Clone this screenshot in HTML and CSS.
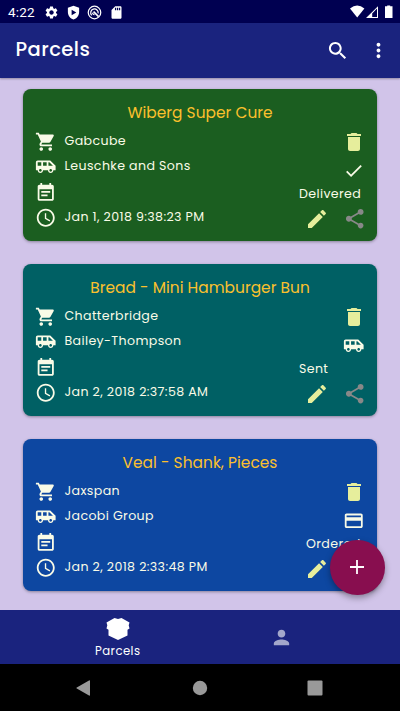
FILE: index.html
```html
<!DOCTYPE html>
<html lang="en">
<head>
<meta charset="utf-8">
<title>Parcels</title>
<link rel="stylesheet" href="styles.css">
</head>
<body>
<svg class="defs" aria-hidden="true">
  <symbol id="cart" viewBox="0 0 24 24"><path d="M7 18c-1.100 0-1.990.9-1.990 2S5.900 22 7 22s2-.9 2-2-.9-2-2-2zM1 2v2h2l3.600 7.590-1.350 2.450c-.16.280-.25.610-.25.960 0 1.100.9 2 2 2h12v-2H7.420c-.14 0-.25-.11-.25-.25l.03-.12.9-1.630h7.450c.75 0 1.410-.41 1.750-1.030l3.580-6.490c.08-.14.120-.31.120-.48 0-.55-.45-1-1-1H5.210l-.94-2H1zm16 16c-1.100 0-1.990.9-1.990 2s.89 2 1.990 2 2-.9 2-2-.9-2-2-2z"/></symbol>
  <symbol id="van" viewBox="0 0 24 24"><path d="M17 5H3c-1.100 0-2 .9-2 2v9h2c0 1.650 1.340 3 3 3s3-1.350 3-3h5.500c0 1.650 1.340 3 3 3s3-1.350 3-3H23v-5l-6-6zM3 11V7h4v4H3zm3 6.500c-.83 0-1.500-.67-1.500-1.500s.67-1.500 1.500-1.500 1.500.67 1.500 1.500-.67 1.500-1.500 1.500zm7-6.500H9V7h4v4zm4.500 6.500c-.83 0-1.500-.67-1.500-1.500s.67-1.500 1.500-1.500 1.500.67 1.500 1.500-.67 1.500-1.500 1.500zM15 11V7h1l4 4h-5z"/></symbol>
  <symbol id="note" viewBox="0 0 24 24"><path d="M17 10H7v2h10v-2zm2-7h-1V1h-2v2H8V1H6v2H5c-1.110 0-1.990.9-1.990 2L3 19c0 1.100.89 2 2 2h14c1.100 0 2-.9 2-2V5c0-1.100-.9-2-2-2zm0 16H5V8h14v11zm-5-5H7v2h7v-2z"/></symbol>
  <symbol id="clock" viewBox="0 0 24 24"><path d="M11.990 2C6.470 2 2 6.480 2 12s4.470 10 9.990 10C17.520 22 22 17.520 22 12S17.520 2 11.990 2zM12 20c-4.420 0-8-3.580-8-8s3.580-8 8-8 8 3.580 8 8-3.580 8-8 8zm.5-13H11v6l5.250 3.150.75-1.230-4.500-2.670z"/></symbol>
  <symbol id="trash" viewBox="0 0 24 24"><path d="M6 19c0 1.100.9 2 2 2h8c1.100 0 2-.9 2-2V7H6v12zM19 4h-3.500l-1-1h-5l-1 1H5v2h14V4z"/></symbol>
  <symbol id="check" viewBox="0 0 24 24"><path d="M9 16.170L4.830 12l-1.420 1.410L9 19 21 7l-1.410-1.410z"/></symbol>
  <symbol id="card" viewBox="0 0 24 24"><path d="M20 4H4c-1.110 0-1.990.89-1.990 2L2 18c0 1.110.89 2 2 2h16c1.110 0 2-.89 2-2V6c0-1.110-.89-2-2-2zm0 14H4v-6h16v6zm0-10H4V6h16v2z"/></symbol>
  <symbol id="pencil" viewBox="0 0 24 24"><path d="M3 17.250V21h3.750L17.810 9.940l-3.750-3.750L3 17.250zM20.710 7.040c.39-.39.39-1.020 0-1.410l-2.340-2.340c-.39-.39-1.020-.39-1.410 0l-1.830 1.830 3.750 3.750 1.830-1.830z"/></symbol>
  <symbol id="share" viewBox="0 0 24 24"><path d="M18 16.080c-.76 0-1.440.3-1.960.77L8.910 12.700c.05-.23.09-.46.09-.7s-.04-.47-.09-.7l7.050-4.110c.54.5 1.250.81 2.040.81 1.660 0 3-1.340 3-3s-1.340-3-3-3-3 1.340-3 3c0 .24.04.47.09.7L8.040 9.810C7.500 9.310 6.790 9 6 9c-1.660 0-3 1.340-3 3s1.340 3 3 3c.79 0 1.500-.31 2.040-.81l7.120 4.160c-.05.21-.08.43-.08.650 0 1.610 1.310 2.920 2.920 2.920s2.920-1.310 2.920-2.920-1.310-2.920-2.920-2.920z"/></symbol>
  <symbol id="search" viewBox="0 0 24 24"><path d="M15.500 14h-.79l-.28-.27C15.410 12.590 16 11.110 16 9.500 16 5.910 13.090 3 9.500 3S3 5.910 3 9.500 5.910 16 9.500 16c1.610 0 3.090-.59 4.230-1.570l.27.28v.79l5 4.990L20.490 19l-4.990-5zm-6 0C7.010 14 5 11.990 5 9.500S7.010 5 9.500 5 14 7.010 14 9.500 11.990 14 9.500 14z"/></symbol>
  <symbol id="more" viewBox="0 0 24 24"><path d="M12 8c1.100 0 2-.9 2-2s-.9-2-2-2-2 .9-2 2 .9 2 2 2zm0 2c-1.100 0-2 .9-2 2s.9 2 2 2 2-.9 2-2-.9-2-2-2zm0 6c-1.100 0-2 .9-2 2s.9 2 2 2 2-.9 2-2-.9-2-2-2z"/></symbol>
  <symbol id="gear" viewBox="0 0 24 24"><path d="M19.140 12.940c.04-.3.060-.61.060-.94 0-.32-.02-.64-.07-.94l2.030-1.580c.18-.14.230-.41.120-.61l-1.920-3.320c-.12-.22-.37-.29-.59-.22l-2.390.96c-.5-.38-1.030-.7-1.620-.94l-.36-2.540c-.04-.24-.24-.41-.48-.41h-3.840c-.24 0-.43.170-.47.410l-.36 2.540c-.59.240-1.130.57-1.620.94l-2.390-.96c-.22-.08-.47 0-.59.220L2.740 8.870c-.12.210-.08.470.120.610l2.030 1.580c-.05.300-.09.630-.09.940s.02.640.070.940l-2.030 1.580c-.18.140-.23.410-.12.610l1.920 3.320c.12.220.37.290.59.220l2.390-.96c.5.380 1.030.7 1.620.94l.36 2.540c.05.240.24.410.48.410h3.840c.24 0 .44-.17.47-.41l.36-2.540c.59-.24 1.130-.56 1.620-.94l2.390.96c.22.08.47 0 .59-.22l1.920-3.320c.12-.22.070-.47-.12-.61l-2.010-1.580zM12 15.600c-1.980 0-3.600-1.620-3.600-3.600s1.620-3.600 3.600-3.600 3.600 1.620 3.600 3.600-1.620 3.600-3.600 3.600z"/></symbol>
  <symbol id="shield" viewBox="0 0 24 24"><path fill-rule="evenodd" d="M12 1L3 4.500V11c0 5.600 3.800 10.700 9 12 5.200-1.300 9-6.400 9-12V4.500zM9 7.500l7.500 4.500L9 16.500z"/></symbol>
  <symbol id="swirl" viewBox="0 0 24 24"><g fill="none" stroke="currentColor" stroke-width="2"><circle cx="12" cy="12" r="10"/><path d="M7.500 16.500A6 6 0 1 1 17.800 13.500" /><path stroke-width="2.600" d="M10.500 10.500l8 8"/><path d="M9 12.500a3 3 0 0 0 3 3"/></g></symbol>
  <symbol id="sd" viewBox="0 0 24 24"><path fill-rule="evenodd" d="M18 2h-8L4 8v12c0 1.100.9 2 2 2h12c1.100 0 2-.9 2-2V4c0-1.100-.9-2-2-2zM9.500 4.500h2v4h-2zm3.200 0h2v4h-2zm3.200 0h2v4h-2z"/></symbol>
  <symbol id="person" viewBox="0 0 24 24"><path d="M12 12c2.210 0 4-1.790 4-4s-1.790-4-4-4-4 1.790-4 4 1.790 4 4 4zm0 2c-2.670 0-8 1.340-8 4v2h16v-2c0-2.660-5.330-4-8-4z"/></symbol>
</svg>

<div class="screen">
  <header class="status">
    <span class="time">4:22</span>
    <svg><use href="#gear"/></svg>
    <svg><use href="#shield"/></svg>
    <svg><use href="#swirl"/></svg>
    <svg><use href="#sd"/></svg>
    <svg class="signals" viewBox="0 0 43 14"><path d="M0 3.500Q7.200-2.300 14.400 3.500L7.200 12.500z"/><path fill-rule="evenodd" d="M28 1.200V13H16zM27 3.600L22.200 8.400V12H27z"/><path d="M37.200 1.300V.4h3v.9h2.300V13H35V1.300z"/></svg>
  </header>

  <div class="appbar">
    <h1>Parcels</h1>
    <svg class="search"><use href="#search"/></svg>
    <svg class="more"><use href="#more"/></svg>
  </div>

  <main class="list">
    <article class="parcel delivered">
      <h2>Wiberg Super Cure</h2>
      <div class="details">
        <ul class="facts">
          <li><svg><use href="#cart"/></svg><span>Gabcube</span></li>
          <li><svg><use href="#van"/></svg><span>Leuschke and Sons</span></li>
          <li><svg><use href="#note"/></svg></li>
          <li><svg><use href="#clock"/></svg><span>Jan 1, 2018 9:38:23 PM</span></li>
        </ul>
        <div class="side">
          <svg class="delete"><use href="#trash"/></svg>
          <svg class="state"><use href="#check"/></svg>
          <span class="label">Delivered</span>
          <div class="actions"><svg class="edit"><use href="#pencil"/></svg><svg class="share"><use href="#share"/></svg></div>
        </div>
      </div>
    </article>

    <article class="parcel sent">
      <h2>Bread - Mini Hamburger Bun</h2>
      <div class="details">
        <ul class="facts">
          <li><svg><use href="#cart"/></svg><span>Chatterbridge</span></li>
          <li><svg><use href="#van"/></svg><span>Bailey-Thompson</span></li>
          <li><svg><use href="#note"/></svg></li>
          <li><svg><use href="#clock"/></svg><span>Jan 2, 2018 2:37:58 AM</span></li>
        </ul>
        <div class="side">
          <svg class="delete"><use href="#trash"/></svg>
          <svg class="state"><use href="#van"/></svg>
          <span class="label">Sent</span>
          <div class="actions"><svg class="edit"><use href="#pencil"/></svg><svg class="share"><use href="#share"/></svg></div>
        </div>
      </div>
    </article>

    <article class="parcel ordered">
      <h2>Veal - Shank, Pieces</h2>
      <div class="details">
        <ul class="facts">
          <li><svg><use href="#cart"/></svg><span>Jaxspan</span></li>
          <li><svg><use href="#van"/></svg><span>Jacobi Group</span></li>
          <li><svg><use href="#note"/></svg></li>
          <li><svg><use href="#clock"/></svg><span>Jan 2, 2018 2:33:48 PM</span></li>
        </ul>
        <div class="side">
          <svg class="delete"><use href="#trash"/></svg>
          <svg class="state"><use href="#card"/></svg>
          <span class="label indent">Ordered</span>
          <div class="actions"><svg class="edit"><use href="#pencil"/></svg><svg class="share"><use href="#share"/></svg></div>
        </div>
      </div>
    </article>
  </main>

  <nav class="tabs">
    <div class="tab active">
      <svg class="box" viewBox="0 0 24 22"><path d="M8.500 0L12 1.100 15.500 0 23.500 4.500l-.8 2.800.8 3.200-2 1.300v5.700L12 22 2.500 17.500v-5.700l-2-1.300.8-3.200-.8-2.800z"/></svg>
      <span>Parcels</span>
    </div>
    <div class="tab"><svg class="person"><use href="#person"/></svg></div>
  </nav>

  <footer class="system">
    <svg viewBox="0 0 16 16"><path d="M.8 7.400L13 .4q1-.4 1 .6v14q0 1-1 .6L.8 8.600q-.9-.6 0-1.200z"/></svg>
    <svg viewBox="0 0 16 16"><circle cx="8" cy="8" r="7.200"/></svg>
    <svg viewBox="0 0 16 16"><rect x=".5" y=".5" width="15" height="15" rx="1"/></svg>
  </footer>

  <button class="fab" aria-label="Add"><svg viewBox="0 0 14 14"><path d="M6.100 0h1.800v6.100H14v1.800H7.900V14H6.100V7.900H0V6.100h6.100z"/></svg></button>
</div>
</body>
</html>
```
FILE: styles.css
```css
* { box-sizing: border-box; }
body, h1, h2, ul { margin: 0; padding: 0; }
body { font-family: Poppins, Inter, sans-serif; background: #d1c4e9; }
svg { display: block; flex: none; fill: currentColor; }
.defs { position: absolute; width: 0; height: 0; }

.screen {
  position: relative;
  width: 400px;
  height: 711px;
  display: flex;
  flex-direction: column;
  overflow: hidden;
}

.status {
  height: 23px;
  flex: none;
  display: flex;
  align-items: center;
  padding: 1px 7px 0 8px;
  background: #000051;
  color: #fff;
}
.status svg { width: 15px; height: 15px; margin-right: 6.500px; }
.status .time { width: 36.300px; font: 13.500px Roboto, sans-serif; letter-spacing: .16px; }
.status .signals { width: 43px; height: 14px; margin: 0 0 1px auto; }

.appbar {
  height: 54.500px;
  flex: none;
  display: flex;
  align-items: center;
  padding-left: 15.500px;
  background: #1a237e;
  color: #fff;
  box-shadow: 0 1px 2px rgba(0, 0, 0, .3);
}
.appbar h1 { flex: 1; padding-bottom: 2px; font-size: 19.500px; font-weight: 500; letter-spacing: .45px; }
.appbar .search { width: 23.500px; height: 23.500px; margin-right: 18px; }
.appbar .more { width: 23px; height: 23px; margin-right: 10px; }

.list {
  flex: 1;
  display: flex;
  flex-direction: column;
  gap: 23px;
  padding: 11.500px 23px 0;
}
.parcel {
  height: 152px;
  flex: none;
  border-radius: 8px;
  color: #f9fbe7;
  box-shadow: 0 1px 3px rgba(0, 0, 0, .35);
}
.delivered { background: #1b5e20; }
.sent { background: #006064; }
.ordered { background: #0d47a1; }
.parcel h2 {
  height: 39.500px;
  padding-top: 7px;
  line-height: 33px;
  font-size: 15.400px;
  font-weight: 400;
  letter-spacing: .03px;
  text-align: center;
  color: #fbc02d;
}
.details { display: flex; justify-content: space-between; }
.facts { list-style: none; padding-left: 12px; }
.facts li { height: 25.500px; display: flex; align-items: center; }
.facts svg { width: 21.500px; height: 21.500px; margin-right: 8px; }
.facts span, .label { font-size: 12.600px; letter-spacing: .37px; white-space: nowrap; }
.facts span { padding-bottom: 1px; }

.side { width: 78px; display: flex; flex-direction: column; }
.side .delete { width: 24px; height: 24px; margin: 1px 0 1px 43px; color: #e6ee9c; }
.side .state { width: 21.500px; height: 21.500px; margin: 5.500px 0 5.500px 44.300px; }
.label { height: 12px; line-height: 13px; }
.indent { padding-left: 7px; }
.actions { height: 39px; display: flex; align-items: center; padding-left: 6px; }
.edit { width: 24px; height: 24px; margin-right: 13.500px; color: #e6ee9c; }
.share { width: 23.500px; height: 23.500px; color: #888; }

.tabs {
  height: 54px;
  flex: none;
  display: flex;
  padding: 0 37px 0 36px;
  background: #1a237e;
  color: #fff;
}
.tab { flex: 1; display: flex; flex-direction: column; align-items: center; justify-content: center; color: #a3a7cb; }
.tab.active { justify-content: flex-start; padding-top: 8px; color: #fff; }
.box { width: 24px; height: 22px; }
.tab span { margin-top: 4px; font-size: 11.700px; letter-spacing: .45px; line-height: 15px; }
.person { width: 23px; height: 23px; }

.system {
  height: 47px;
  flex: none;
  display: flex;
  justify-content: space-between;
  align-items: center;
  padding: 0 77px 0 76px;
  background: #000;
  color: #999;
}
.system svg { width: 16px; height: 16px; }

.fab {
  position: absolute;
  left: 330px;
  top: 540px;
  width: 54.500px;
  height: 54.500px;
  padding: 0;
  display: grid;
  place-items: center;
  border: 0;
  border-radius: 50%;
  background: #880e4f;
  color: #fff;
  box-shadow: 0 3px 6px rgba(0, 0, 0, .35);
}
.fab svg { width: 14px; height: 14px; }
```
